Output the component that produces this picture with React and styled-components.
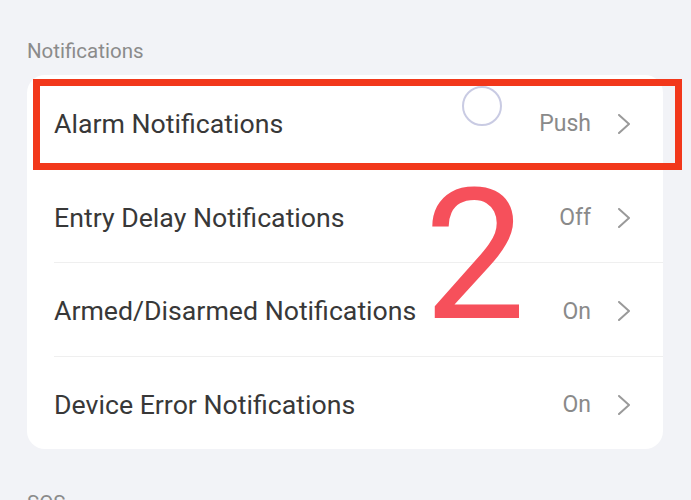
import React from 'react'
import styled, { createGlobalStyle } from 'styled-components'

const GlobalStyle = createGlobalStyle`
  html, body {
    margin: 0;
    padding: 0;
    background: #f2f3f7;
    font-family: Roboto, "Noto Sans", Arial, sans-serif;
    overflow: hidden;
  }
`;

const Page = styled.div`
  position: relative;
  width: 691px;
  height: 500px;
  padding: 38px 28px 0 27px;
  box-sizing: border-box;
`;

const SectionTitle = styled.div`
  font-size: 20.5px;
  line-height: 26px;
  color: #8b8b8b;
  margin-bottom: ${p => p.$gap || 0}px;
`;

const Card = styled.div`
  background: #ffffff;
  border-radius: 18px;
  overflow: hidden;
  margin-bottom: 41px;
`;

const Row = styled.div`
  display: flex;
  align-items: center;
  height: 93.5px;
  margin-left: 27px;
  padding: 4px 32px 0 0;
  box-sizing: border-box;
  border-top: ${p => (p.$first ? 'none' : '1px solid #efefef')};
`;

const Label = styled.div`
  flex: 1;
  font-size: 26.7px;
  color: #383838;
`;

const Value = styled.div`
  font-size: 23px;
  color: #8a8a8a;
  margin-right: 26px;
`;

const Chevron = () => (
  <svg width="14" height="20" viewBox="0 0 14 20" fill="none">
    <polyline points="2,1 12,10 2,19" stroke="#9a9a9a" strokeWidth="2" strokeLinecap="round" strokeLinejoin="round" />
  </svg>
);

const Highlight = styled.div`
  position: absolute;
  left: 33px;
  top: 79px;
  width: 649px;
  height: 91px;
  border: 7.5px solid #f2381b;
  box-sizing: border-box;
  pointer-events: none;
`;

const TouchRing = styled.div`
  position: absolute;
  left: 462px;
  top: 86px;
  width: 40px;
  height: 40px;
  border-radius: 50%;
  border: 2px solid #c9cbe3;
  box-sizing: border-box;
`;

const StepNumber = styled.div`
  position: absolute;
  left: 424px;
  top: 156px;
  font-size: 181px;
  line-height: 200px;
  font-weight: 400;
  color: #f6505b;
`;

const rows = [
  { label: 'Alarm Notifications', value: 'Push' },
  { label: 'Entry Delay Notifications', value: 'Off' },
  { label: 'Armed/Disarmed Notifications', value: 'On' },
  { label: 'Device Error Notifications', value: 'On' },
];

export default function App() {
  return (
    <>
      <GlobalStyle />
      <Page>
        <SectionTitle $gap={11}>Notifications</SectionTitle>
        <Card>
          {rows.map((r, i) => (
            <Row key={r.label} $first={i === 0}>
              <Label>{r.label}</Label>
              <Value>{r.value}</Value>
              <Chevron />
            </Row>
          ))}
        </Card>
        <SectionTitle>SOS</SectionTitle>
        <Highlight />
        <TouchRing />
        <StepNumber>2</StepNumber>
      </Page>
    </>
  );
}
